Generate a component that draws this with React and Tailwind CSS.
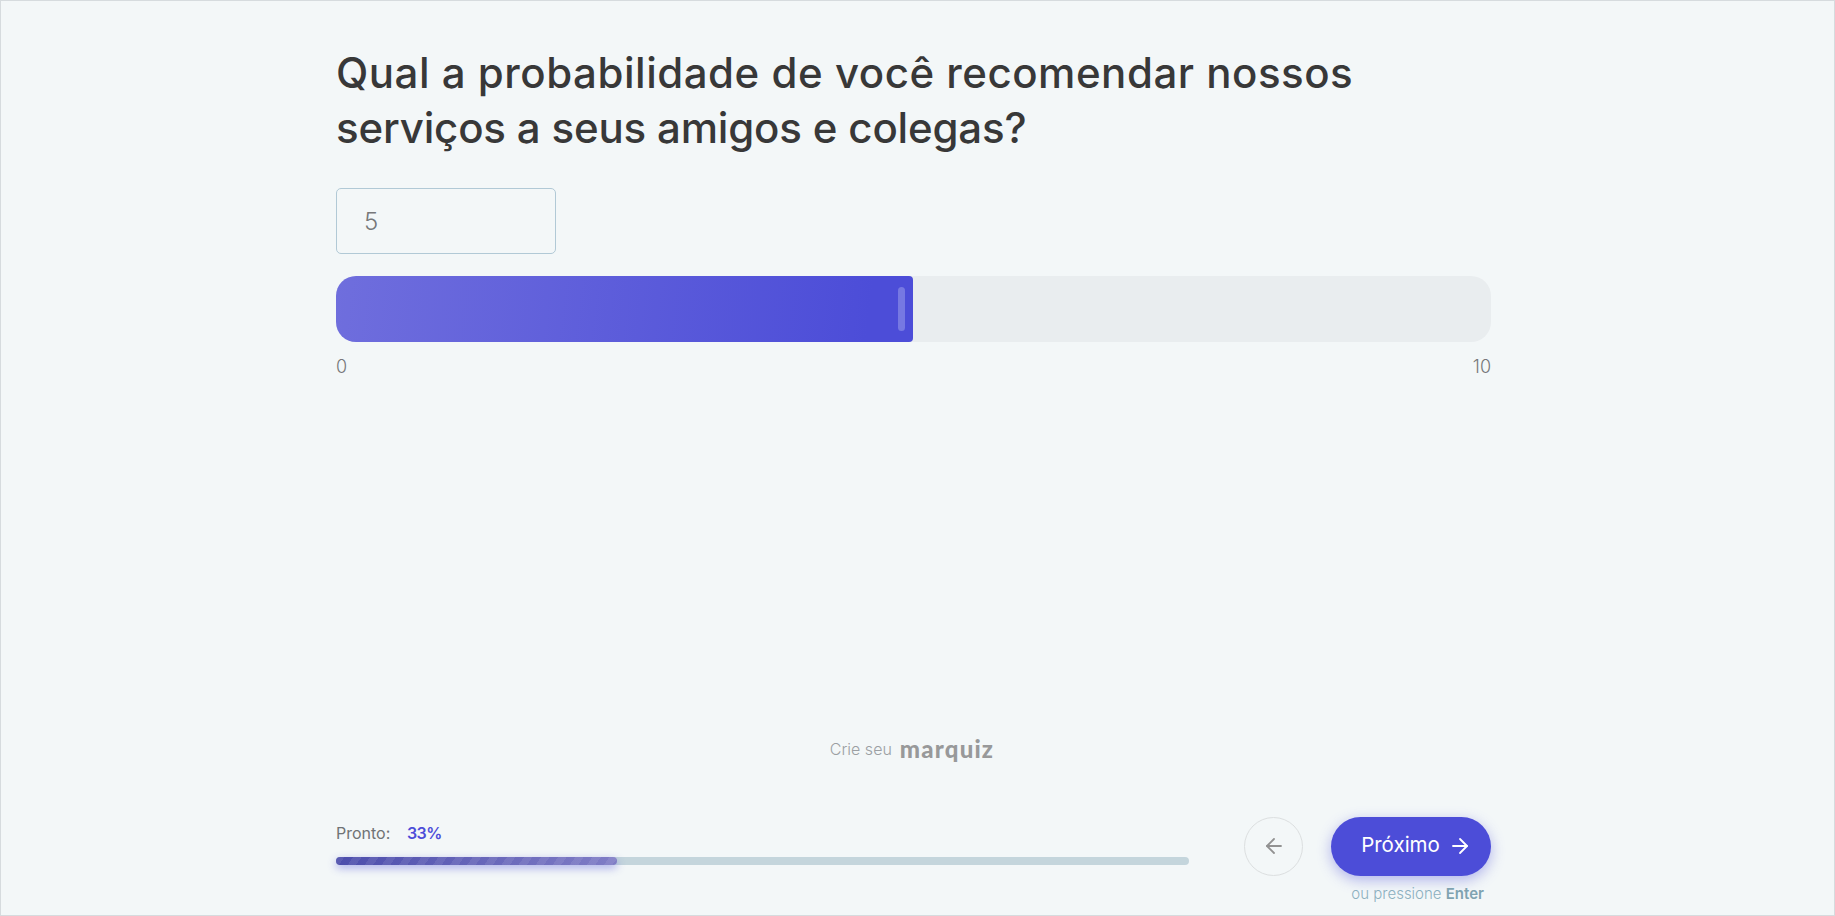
import React from 'react';
import { ArrowLeft, ArrowRight } from 'lucide-react';

function Slider() {
  return (
    <div className="mt-[22px]">
      <div className="h-[66px] rounded-[20px] bg-[#e9edef]">
        <div className="w-[577px] h-full rounded-l-[20px] rounded-r-[4px] bg-[linear-gradient(97deg,#6f6edd,#4c4dd8_92%)] flex items-center justify-end pr-[8px]">
          <div className="w-[7px] h-[44px] rounded-full bg-[#7678e2]" />
        </div>
      </div>
      <div className="mt-[14px] flex justify-between text-[18px] leading-[22px] text-[#77787a] font-light">
        <span>0</span>
        <span>10</span>
      </div>
    </div>
  );
}

function Progress() {
  return (
    <div className="w-[853px] pt-[6px]">
      <div className="flex items-center text-[16px] leading-[20px] mb-[14px]">
        <span className="text-[#6f7375] w-[71px]">Pronto:</span>
        <span className="text-[#4c4dd8] font-semibold tracking-[-0.6px]">33%</span>
      </div>
      <div className="h-[8px] rounded-full bg-[#c4d5dc]">
        <div className="w-[281px] h-full rounded-full shadow-[0_3px_8px_rgba(76,77,217,0.45)] bg-[linear-gradient(90deg,rgba(76,77,172,1),rgba(128,125,198,1))] relative overflow-hidden">
          <div className="absolute inset-0 rounded-full bg-[repeating-linear-gradient(125deg,rgba(255,255,255,0.08)_0,rgba(255,255,255,0.08)_7px,transparent_7px,transparent_14px)]" />
        </div>
      </div>
    </div>
  );
}

export default function App() {
  return (
    <div className="h-[916px] border border-[#d6dbde] bg-[#f3f7f8] pl-[335px] pr-[343px] flex flex-col font-['Inter',sans-serif]">
      <h1 className="pt-[44px] text-[42px] leading-[55px] font-medium text-[#383838]">
        <span className="block tracking-[0.52px]">Qual a probabilidade de você recomendar nossos</span>
        <span className="block tracking-[-0.17px]">serviços a seus amigos e colegas?</span>
      </h1>

      <input
        readOnly
        value="5"
        className="mt-[33px] w-[220px] h-[66px] rounded-[5px] border border-[#b1c9d6] bg-transparent pl-[27px] text-[24px] font-light text-[#77787a] outline-none"
      />

      <Slider />

      <div className="mt-auto flex items-center justify-center gap-[8px] mb-[54px] pr-[3px]">
        <span className="text-[16px] text-[#9b9fa3] font-light">Crie seu</span>
        <span className="font-['Lato',sans-serif] font-black text-[24px] leading-[28px] tracking-[1.2px] text-[#98999a]">marquiz</span>
      </div>

      <div className="flex items-start justify-between">
        <Progress />
        <div className="flex flex-col items-end">
          <div className="flex items-center gap-[28px]">
            <button className="w-[59px] h-[59px] rounded-full border border-[#dcdfe0] flex items-center justify-center text-[#929292]">
              <ArrowLeft size={24} strokeWidth={1.8} className="mb-[1px]" />
            </button>
            <button className="w-[160px] h-[59px] rounded-full bg-[#4c4dd8] text-white text-[20.5px] flex items-center justify-center gap-[8px] pl-[11px] shadow-[0_4px_14px_rgba(76,77,217,0.4)]">
              <span className="pb-[3px]">Próximo</span>
              <ArrowRight size={24} strokeWidth={1.8} className="mb-[1px]" />
            </button>
          </div>
          <div className="mt-[9px] mb-[12px] pr-[7px] text-[15px] leading-[18px] text-[#8cb0bf] font-light">
            ou pressione <span className="font-semibold text-[#7fa3b1]">Enter</span>
          </div>
        </div>
      </div>
    </div>
  );
}
